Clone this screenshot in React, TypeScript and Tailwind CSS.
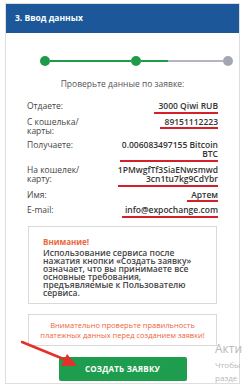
import React from 'react';

const rows: { label: React.ReactNode; value: React.ReactNode; mt: string; line: string }[] = [
  { label: 'Отдаете:', value: '3000 Qiwi RUB', mt: 'mt-[11px]', line: 'w-[64px]' },
  { label: <>С кошелька/<br />карты:</>, value: '89151112223', mt: 'mt-[3px]', line: 'w-[58px]' },
  { label: 'Получаете:', value: <>0.006083497155 Bitcoin<br />BTC</>, mt: 'mt-[4px]', line: 'w-[98px]' },
  { label: <>На кошелек/<br />карту:</>, value: <>1PMwgfTf3SiaENwsmwd<br />3cn1tu7kg9CdYbr</>, mt: 'mt-[3px]', line: 'w-[100px]' },
  { label: 'Имя:', value: 'Артем', mt: 'mt-[3px]', line: 'w-[31px]' },
  { label: 'E-mail:', value: 'info@expochange.com', mt: 'mt-[3px]', line: 'w-[96px]' },
];

export default function App() {
  return (
    <div className="relative h-[386px] overflow-hidden bg-white pt-[3px] pl-[5px] pr-[4px] font-['Open_Sans',sans-serif]">
      <div className="h-[381px] border border-[#dedede] bg-white">
        {/* header */}
        <div className="flex h-[29px] items-center bg-[#1c5899] pl-[9px] text-[8.5px] font-bold text-white">
          3. Ввод данных
        </div>

        {/* steps */}
        <div className="ml-[34px] mt-[23px] flex items-center">
          <div className="h-[10px] w-[10px] rounded-full bg-[#1f9a49]" />
          <div className="h-[2px] w-[81px] bg-[#1f9a49]" />
          <div className="h-[10px] w-[10px] rounded-full bg-[#1f9a49]" />
          <div className="h-[2px] w-[27px] bg-[#1f9a49]" />
          <div className="h-[2px] w-[55px] bg-[#b3b6c2]" />
          <div className="h-[10px] w-[10px] rounded-full bg-[#a4a7b3]" />
        </div>

        <div className="mt-[12px] text-center text-[8.5px] leading-[12px] text-[#555]">
          Проверьте данные по заявке:
        </div>

        <div className="px-[21px]">
          {rows.map((r, i) => (
            <div key={i} className={`${r.mt} flex items-start justify-between text-[8.5px] leading-[9.5px]`}>
              <div className="text-[#444]">{r.label}</div>
              <div className="flex flex-col items-end">
                <div className="text-right font-semibold text-[#333]">{r.value}</div>
                <div className={`${r.line} mt-[1px] h-[2px] bg-[#d4202a]`} />
              </div>
            </div>
          ))}

          {/* warning */}
          <div className="mx-[1px] mt-[8px] border border-[#d9d9d9] px-[14px] pb-[6px] pt-[9px]">
            <div className="text-[8px] font-bold leading-[11px] text-[#e8683c]">Внимание!</div>
            <div className="mt-[2px] text-[8.5px] font-semibold leading-[8px] text-[#444]">
              Использование сервиса после нажатия кнопки «Создать заявку» означает, что вы принимаете все основные требования, предъявляемые к Пользователю сервиса.
            </div>
          </div>

          <div className="mx-[1px] mt-[10px] border border-[#d9d9d9] py-[5px] text-center text-[7.5px] leading-[10px] text-[#ef643a]">
            Внимательно проверьте правильность<br />платежных данных перед созданием заявки!
          </div>

          <div className="mt-[11px] flex justify-center">
            <button className="flex h-[24px] w-[128px] items-center justify-center rounded-[2px] bg-[#1f9d4e] text-[8px] font-bold tracking-[0.2px] text-white">
              СОЗДАТЬ ЗАЯВКУ
            </button>
          </div>
        </div>
      </div>

      {/* red arrow annotation */}
      <svg className="absolute left-0 top-0" width="244" height="386" viewBox="0 0 244 386">
        <line x1="22" y1="342" x2="66" y2="360" stroke="#e3302a" strokeWidth="2.5" strokeLinecap="round" />
        <polygon points="77,366 61,366 67,354" fill="#e3302a" />
      </svg>

      {/* windows watermark */}
      <div className="absolute left-[215px] top-[341px] whitespace-nowrap text-[12px] leading-[16px] text-[#b9b9b9]">Акти</div>
      <div className="absolute left-[215px] top-[358px] whitespace-nowrap text-[8px] leading-[13px] text-[#b9b9b9]">
        Чтобы<br />разде
      </div>
    </div>
  );
}
